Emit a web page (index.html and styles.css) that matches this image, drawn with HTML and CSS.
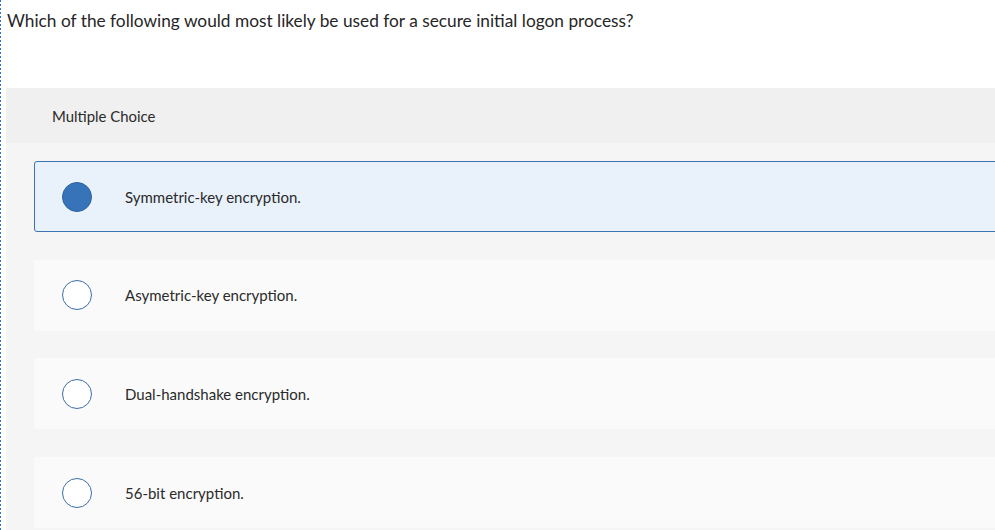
FILE: index.html
```
<!DOCTYPE html>
<html lang="en">
<head>
<meta charset="utf-8">
<title>Multiple Choice</title>
<link rel="stylesheet" href="styles.css">
</head>
<body>
<div class="page">
  <p class="question">Which of the following would most likely be used for a secure initial logon process?</p>
  <section class="panel">
    <div class="panel-header">Multiple Choice</div>
    <div class="options">
      <div class="option selected"><span class="radio"></span><span class="label">Symmetric-key encryption.</span></div>
      <div class="option"><span class="radio"></span><span class="label">Asymetric-key encryption.</span></div>
      <div class="option"><span class="radio"></span><span class="label">Dual-handshake encryption.</span></div>
      <div class="option"><span class="radio"></span><span class="label">56-bit encryption.</span></div>
    </div>
  </section>
</div>
</body>
</html>
```
FILE: styles.css
```
html, body {
  margin: 0;
  padding: 0;
  background: #ffffff;
  overflow: hidden;
}
body {
  font-family: Lato, "Liberation Sans", sans-serif;
  color: #2a2a2a;
}
.page {
  background: linear-gradient(#2f72d2 50%, transparent 50%) left top / 1px 4px repeat-y;
  padding-left: 6px;
  min-height: 530px;
  box-sizing: border-box;
}
.question {
  margin: 0;
  padding: 10px 0 0 1px;
  height: 88px;
  box-sizing: border-box;
  font-size: 17.3px;
  line-height: 22px;
  color: #262626;
}
.panel {
  background: #f5f5f5;
  margin-right: -20px;
  min-height: 442px;
}
.panel-header {
  height: 55px;
  background: #f0f0f0;
  display: flex;
  align-items: center;
  padding-left: 46px;
  font-size: 14.9px;
  color: #2a2a2a;
}
.options {
  display: flex;
  flex-direction: column;
  gap: 27.7px;
  padding: 18px 0 0 28px;
}
.option {
  height: 71px;
  box-sizing: border-box;
  display: flex;
  align-items: center;
  padding-left: 27px;
  background: #fafafa;
  border: 1px solid transparent;
  border-radius: 3px;
}
.option.selected {
  background: #e9f1fa;
  border-color: #3b72b3;
}
.radio {
  width: 30px;
  height: 30px;
  box-sizing: border-box;
  border-radius: 50%;
  border: 1.3px solid #3d6ea6;
  background: #ffffff;
  flex: none;
}
.option.selected .radio {
  background: #3673b8;
  border-color: #2e62a0;
}
.label {
  margin-left: 33px;
  font-size: 15px;
  color: #2a2a2a;
}
```
